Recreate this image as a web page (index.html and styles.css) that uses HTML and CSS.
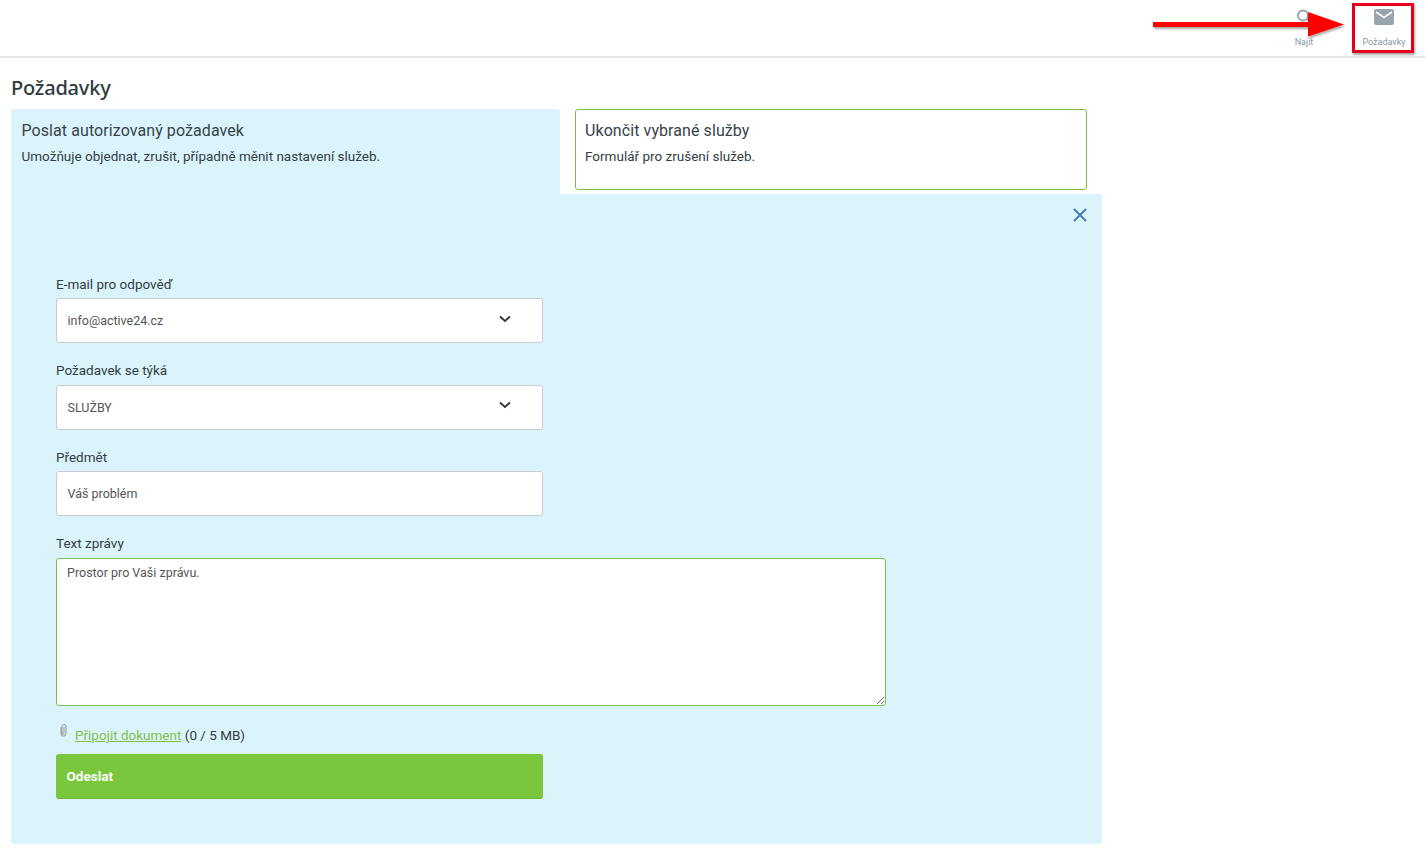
FILE: index.html
```html
<!DOCTYPE html>
<html lang="cs">
<head>
<meta charset="utf-8">
<title>Požadavky</title>
<link rel="stylesheet" href="styles.css">
</head>
<body>
<header class="topbar">
  <a class="nav-item nav-search">
    <svg class="nav-icon" width="18" height="18" viewBox="0 0 18 18"><circle cx="8" cy="7.500" r="5" fill="none" stroke="#98a4ae" stroke-width="2"/><path d="M12 11l4 4" stroke="#98a4ae" stroke-width="2.400"/></svg>
    <span>Najít</span>
  </a>
  <a class="nav-item nav-requests">
    <svg class="nav-icon" width="20" height="16" viewBox="0 0 20 16"><rect width="20" height="16" rx="2" fill="#98a4ae"/><path d="M2 3l8 5.500L18 3" fill="none" stroke="#fff" stroke-width="1.600"/></svg>
    <span>Požadavky</span>
  </a>
  <div class="callout-box"></div>
  <svg class="callout-arrow" width="200" height="50" viewBox="0 0 200 50">
    <defs><filter id="sh" x="-5%" y="-20%" width="110%" height="150%"><feDropShadow dx="1" dy="2" stdDeviation="1" flood-color="#000" flood-opacity=".35"/></filter></defs>
    <path d="M2 22H157V12L193 24.500 157 36.500V27H2z" fill="#f00" filter="url(#sh)"/>
  </svg>
</header>

<main class="page">
  <h1 class="page-title">Požadavky</h1>
  <div class="tabs">
    <section class="tab tab-active">
      <h2>Poslat autorizovaný požadavek</h2>
      <p>Umožňuje objednat, zrušit, případně měnit nastavení služeb.</p>
    </section>
    <section class="tab tab-idle">
      <h2>Ukončit vybrané služby</h2>
      <p>Formulář pro zrušení služeb.</p>
    </section>
  </div>
  <form class="panel">
    <svg class="close" width="14" height="14" viewBox="0 0 14 14"><path d="M1 1l12 12M13 1L1 13" stroke="#3f7cb5" stroke-width="1.800" fill="none"/></svg>
    <div class="field">
      <div class="label">E-mail pro odpověď</div>
      <div class="control select"><span>info@active24.cz</span>
        <svg width="12" height="8" viewBox="0 0 12 8"><path d="M1 1.500l5 4.500 5-4.500" fill="none" stroke="#333" stroke-width="1.800"/></svg></div>
    </div>
    <div class="field field-second">
      <div class="label label-tall">Požadavek se týká</div>
      <div class="control select"><span>SLUŽBY</span>
        <svg width="12" height="8" viewBox="0 0 12 8"><path d="M1 1.500l5 4.500 5-4.500" fill="none" stroke="#333" stroke-width="1.800"/></svg></div>
    </div>
    <div class="field">
      <div class="label">Předmět</div>
      <div class="control"><span>Váš problém</span></div>
    </div>
    <div class="field-last">
      <div class="label label-tall">Text zprávy</div>
      <textarea class="message">Prostor pro Vaši zprávu.</textarea>
    </div>
    <div class="attach">
      <svg width="11" height="15" viewBox="0 0 11 15"><path d="M3 4v6.500a2.500 2.500 0 0 0 5 0V3.500a2 2 0 0 0-4 0V10a1 1 0 0 0 2 0V4" fill="none" stroke="#9fa6aa" stroke-width="1.200"/></svg>
      <span><a class="attach-link">Připojit dokument</a> (0 / 5 MB)</span>
    </div>
    <button type="button" class="submit">Odeslat</button>
  </form>
</main>
</body>
</html>
```
FILE: styles.css
```css
* { box-sizing: border-box; }
html, body { margin: 0; padding: 0; }
body {
  background: #fff;
  color: #333;
  font-family: Roboto, "Liberation Sans", sans-serif;
  font-size: 14px;
  height: 857px;
  overflow: hidden;
}
.topbar {
  position: relative;
  height: 58px;
  border-bottom: 2px solid #e6e9eb;
  display: flex;
  justify-content: flex-end;
  padding-right: 1px;
}
.nav-item {
  display: flex;
  flex-direction: column;
  align-items: center;
  width: 80px;
  font-size: 9px;
  line-height: 11px;
  color: #8b98a3;
}
.nav-search { padding-top: 8px; gap: 11px; }
.nav-requests { padding-top: 9px; gap: 12px; }
.nav-icon { display: block; }
.callout-box {
  position: absolute;
  left: 1352px;
  top: 3px;
  width: 62px;
  height: 50px;
  border: 3px solid #e6001a;
  box-shadow: 1px 2px 2px rgba(0,0,0,.35);
}
.callout-arrow { position: absolute; left: 1151px; top: 0; }
.page { padding: 0 0 0 11px; }
.page-title {
  margin: 0;
  height: 51px;
  padding-top: 16px;
  font-family: "Noto Sans", sans-serif;
  font-weight: 500;
  font-size: 20px;
  letter-spacing: -.2px;
  line-height: 28px;
  color: #2f3a3e;
}
.tabs { display: flex; gap: 15px; width: 1076px; align-items: flex-start; }
.tab { height: 85px; padding: 12px 10.500px 0; }
.tab h2 {
  margin: 0;
  font-weight: 400;
  font-size: 16px;
  line-height: 20px;
  color: #37424a;
  letter-spacing: .08px;
}
.tab p { margin: 6px 0 0; font-size: 13.500px; line-height: 18px; color: #333c42; }
.tab-active {
  width: 549px;
  background: #dbf4fc;
  border-radius: 3px 3px 0 0;
}
.tab-idle {
  width: 512px;
  height: 81px;
  border: 1px solid #7ac143;
  border-radius: 3px;
  padding: 11px 9px 0;
}
.panel {
  position: relative;
  width: 1091px;
  height: 650px;
  background: #dbf4fc;
  padding: 81px 0 0 45px;
  border-radius: 0 0 3px 3px;
}
.close { position: absolute; top: 14px; right: 15px; }
.field { margin-bottom: 18px; }
.field-second .select svg { margin-top: -5px; }
.label { font-size: 13.500px; line-height: 18px; margin-bottom: 5px; color: #333c42; }
.label-tall { margin-bottom: 6px; }
.control {
  width: 487px;
  height: 45px;
  background: #fff;
  border: 1px solid #c6ccd0;
  border-radius: 3px;
  padding: 0 10.500px;
  display: flex;
  align-items: center;
  justify-content: space-between;
  font-size: 12.500px;
  color: #555;
}
.select svg { margin: -3px 20.500px 0 0; }
.message {
  display: block;
  width: 830px;
  height: 148px;
  border: 1px solid #7ac143;
  border-radius: 3px;
  background: #fff;
  padding: 6px 10px;
  margin: 0;
  outline: 0;
  font-family: Roboto, "Liberation Sans", sans-serif;
  font-size: 12.500px;
  line-height: 16px;
  color: #555;
}
.attach {
  display: flex;
  align-items: flex-start;
  gap: 6px;
  height: 29px;
  margin: 19px 0 0 2px;
  font-size: 13.500px;
  line-height: 20px;
  color: #333c42;
}
.attach svg { margin-top: -2px; }
.attach-link { color: #85bf4b; text-decoration: underline; }
.submit {
  display: block;
  width: 487px;
  height: 45px;
  border: 0;
  border-bottom: 1px solid #6fb23b;
  border-radius: 3px;
  background: #7ac63c;
  color: #fff;
  font-family: Roboto, "Liberation Sans", sans-serif;
  font-weight: 700;
  font-size: 13.500px;
  text-align: left;
  padding: 0 10.500px;
}
```
